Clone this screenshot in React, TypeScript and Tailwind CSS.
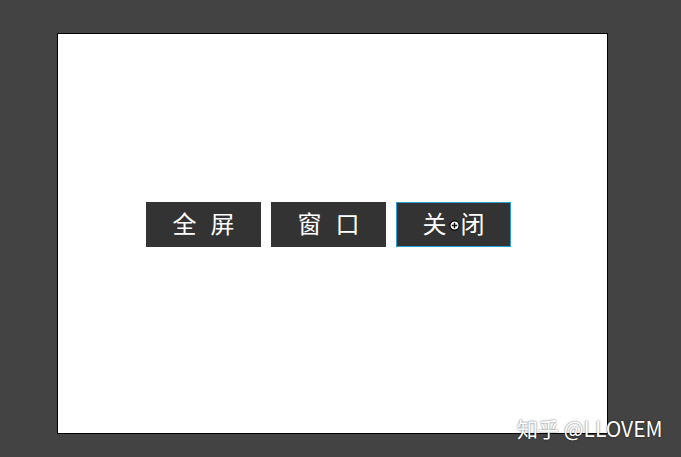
import React from 'react';

const cjk = "font-['Noto_Sans_CJK_SC','Noto_Sans',sans-serif]";

const Btn = ({ a, b, active = false, cursor = false }: { a: string; b: string; active?: boolean; cursor?: boolean }) => (
  <button
    className={`relative flex h-[45px] w-[115px] items-center justify-center gap-[14px] bg-[#333333] pb-[3px] text-[24px] leading-none text-white ${cjk} ${
      active ? 'border border-[#2a9fd6]' : ''
    }`}
  >
    <span>{a}</span>
    <span>{b}</span>
    {cursor && (
      <svg className="absolute left-[52px] top-[17px]" width="11" height="11" viewBox="0 0 11 11">
        <circle cx="5.5" cy="5.5" r="4.6" fill="#fff" stroke="#000" strokeWidth="1.2" />
        <path d="M5.5 2.8v5.4M2.8 5.5h5.4" stroke="#000" strokeWidth="1.4" />
      </svg>
    )}
  </button>
);

const App = () => {
  return (
    <div className="relative h-[457px] w-[681px] overflow-hidden bg-[#434343] pl-[57px] pt-[33px]">
      {/* Canvas */}
      <div className="flex h-[401px] w-[551px] items-start gap-[10px] border border-black bg-white pl-[88px] pt-[168px]">
        <Btn a="全" b="屏" />
        <Btn a="窗" b="口" />
        <Btn a="关" b="闭" active cursor />
      </div>

      {/* Watermark */}
      <div
        className={`absolute left-[517px] top-[418px] z-10 text-[21px] leading-none text-white [text-shadow:0_0_2px_rgba(0,0,0,0.7)] ${cjk}`}
      >
        知乎 @LLOVEM
      </div>
    </div>
  );
};

export default App;
